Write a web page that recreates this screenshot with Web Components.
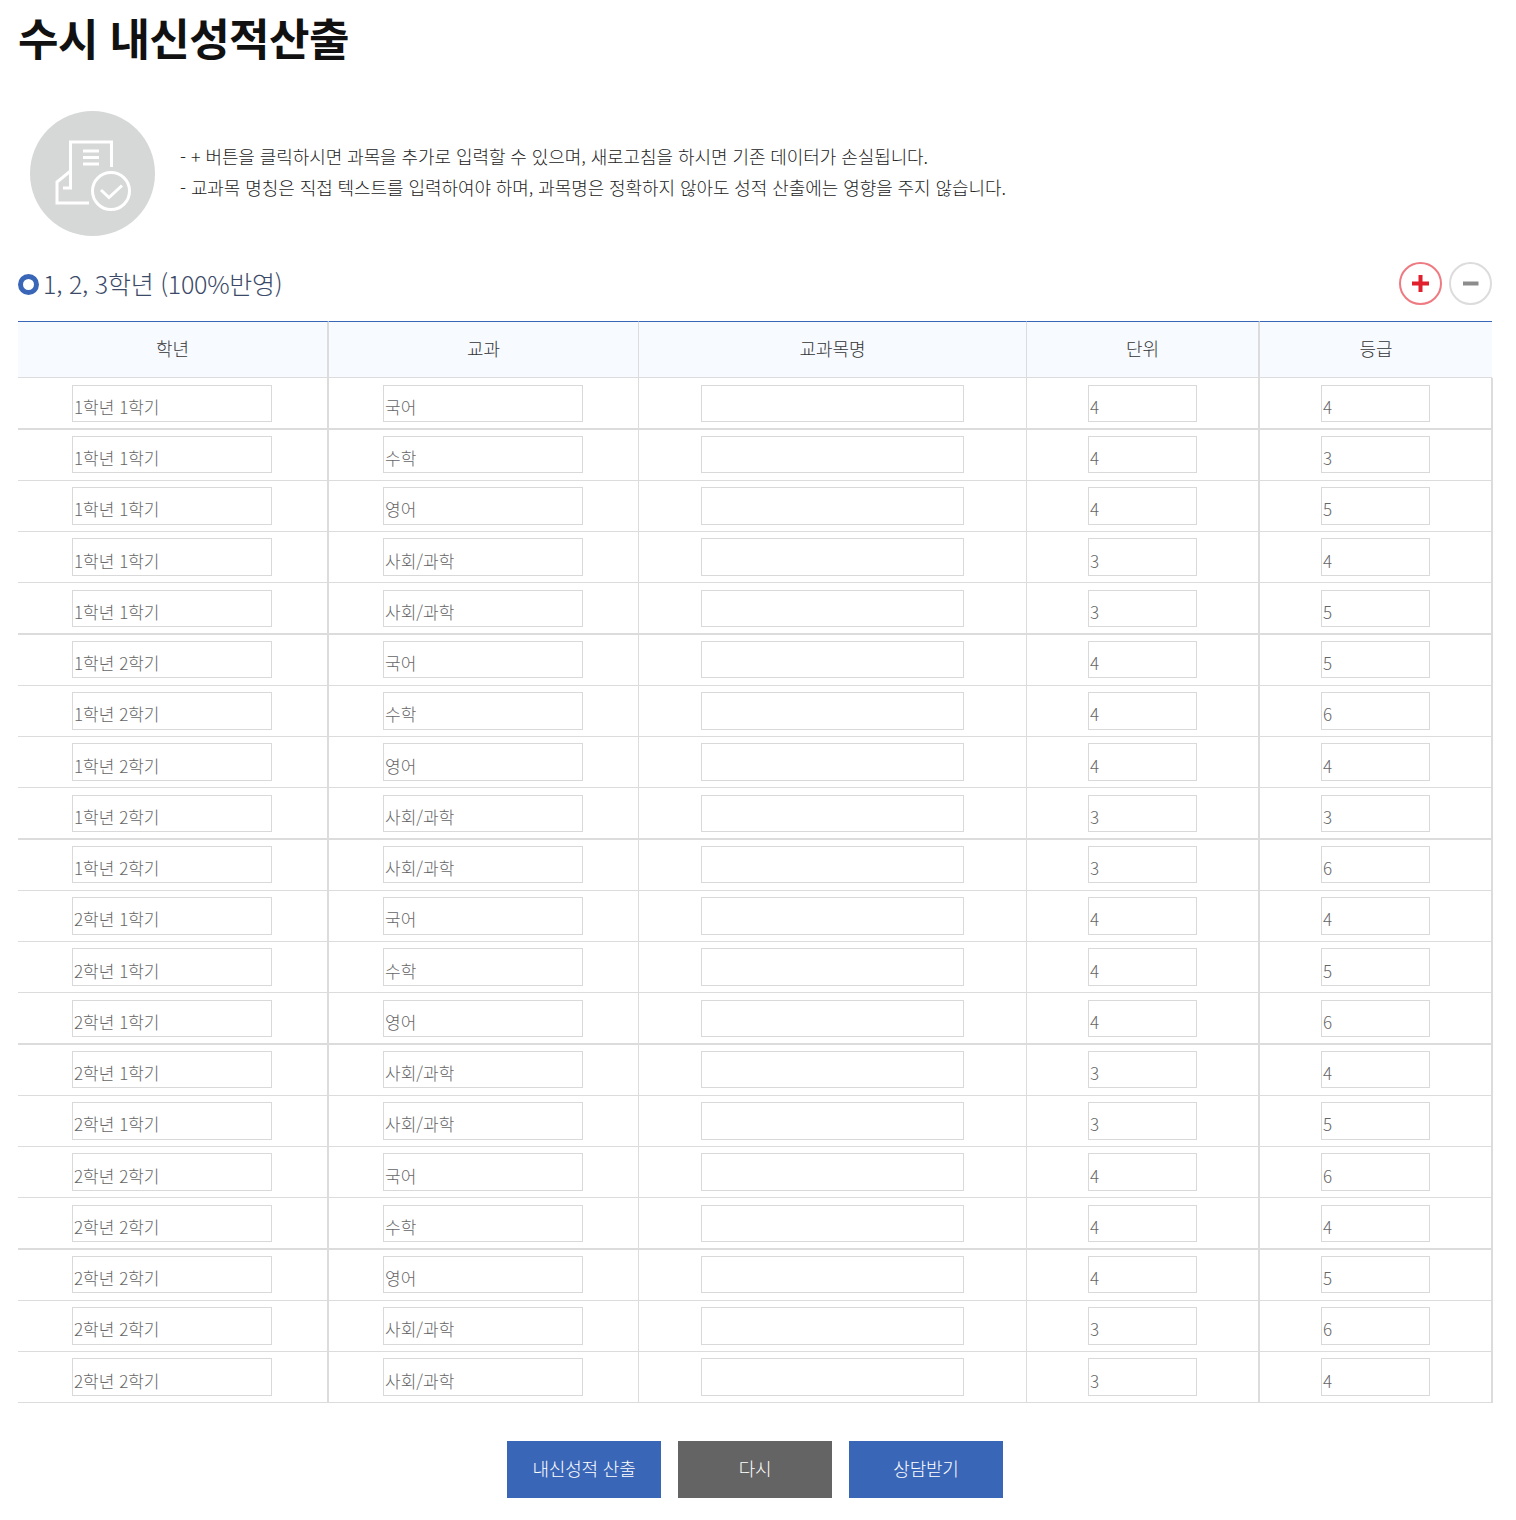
<!DOCTYPE html>
<html lang="ko">
<head>
<meta charset="utf-8">
<title>수시 내신성적산출</title>
<style>
  html, body { margin: 0; background: #fff; }
  body { font-family: "Noto Sans CJK KR", "Noto Sans", sans-serif; }
</style>
</head>
<body>
<grade-page></grade-page>
<script>
class GradePage extends HTMLElement {
  constructor() {
    super()
    const shadow = this.attachShadow({mode: 'open'})
    shadow.innerHTML = `
      <style>
        :host { display: block; padding: 0 24px 22px 18px; box-sizing: border-box; width: 1516px; }
        h1 { margin: 0; height: 111px; font-size: 44px; line-height: 74px; font-weight: 700; letter-spacing: -0.6px; color: #111; }
      </style>
      <h1>수시 내신성적산출</h1>
      <notice-box>
        <div>- + 버튼을 클릭하시면 과목을 추가로 입력할 수 있으며, 새로고침을 하시면 기존 데이터가 손실됩니다.</div>
        <div>- 교과목 명칭은 직접 텍스트를 입력하여야 하며, 과목명은 정확하지 않아도 성적 산출에는 영향을 주지 않습니다.</div>
      </notice-box>
      <section-head>1, 2, 3학년 (100%반영)</section-head>
      <score-table></score-table>
      <action-bar></action-bar>
    `
  }
}

class NoticeBox extends HTMLElement {
  constructor() {
    super()
    const shadow = this.attachShadow({mode: 'open'})
    shadow.innerHTML = `
      <style>
        :host { display: flex; align-items: center; height: 125px; padding-left: 12px; gap: 25px; font-size: 18px; line-height: 31px; letter-spacing: -0.08px; color: #222; font-weight: 300; }
        .round { width: 125px; height: 125px; flex: none; }
        .text { padding-bottom: 4px; }
      </style>
      <svg class="round" viewBox="0 0 125 125">
        <circle cx="62.5" cy="62.5" r="62.5" fill="#d6d7d7"/>
        <g fill="none" stroke="#fff" stroke-width="3">
          <path d="M40.500 61V31H81.500V56"/>
          <path d="M40.500 60L27 71V92H59"/>
          <path d="M40.500 60V77H33"/>
          <path d="M53 40H69M53 46.500H69M53 53H69"/>
          <circle cx="81" cy="80" r="18.500"/>
          <path d="M71 79L79 86.500L92 74.500"/>
        </g>
      </svg>
      <div class="text"><slot></slot></div>
    `
  }
}

class SectionHead extends HTMLElement {
  constructor() {
    super()
    const shadow = this.attachShadow({mode: 'open'})
    shadow.innerHTML = `
      <style>
        :host { display: flex; align-items: center; height: 85px; box-sizing: border-box; padding-top: 10px; font-size: 25px; letter-spacing: -0.25px; color: #3b4a68; font-weight: 300; }
        .dot { width: 21px; height: 21px; box-sizing: border-box; border: 5px solid #3a66b8; border-radius: 50%; margin: 2px 4px 0 0; }
        .title { flex: 1; margin-bottom: 2px; }
        .btn { width: 43px; height: 43px; display: block; }
        .add { margin-right: 7px; }
      </style>
      <span class="dot"></span>
      <span class="title"><slot></slot></span>
      <svg class="btn add" viewBox="0 0 43 43"><circle cx="21.500" cy="21.500" r="20.500" fill="#fff" stroke="#ee7a82" stroke-width="2"/><path d="M21.500 13V30M13 21.500H30" stroke="#e0202c" stroke-width="4"/></svg>
      <svg class="btn" viewBox="0 0 43 43"><circle cx="21.500" cy="21.500" r="20.500" fill="#fff" stroke="#dcdcdc" stroke-width="2"/><path d="M14 21.500H29.500" stroke="#8c8c8c" stroke-width="4"/></svg>
    `
  }
}

class ScoreField extends HTMLElement {
  constructor() {
    super()
    const shadow = this.attachShadow({mode: 'open'})
    shadow.innerHTML = `
      <style>
        :host { display: block; box-sizing: border-box; height: var(--field-h, 37px); border: 1px solid #d9d9d9; background: #fff; padding: var(--field-pad, 9px) 0 0 1px; font-size: 17px; line-height: 24px; color: #666; overflow: hidden; white-space: nowrap; }
      </style>
      <slot></slot>
    `
  }
}

class ScoreTable extends HTMLElement {
  constructor() {
    super()
    const shadow = this.attachShadow({mode: 'open'})
    const subjects = ['국어', '수학', '영어', '사회/과학', '사회/과학']
    const terms = ['1학년 1학기', '1학년 2학기', '2학년 1학기', '2학년 2학기']
    const units = [4, 4, 4, 3, 3]
    const grades = [4,3,5,4,5, 5,6,4,3,6, 4,5,6,4,5, 6,4,5,6,4]
    let rows = ''
    for (let i = 0; i < 20; i++) {
      const s = i % 5
      // the source table lands on fractions, so every 4th row gets a 2px line
      rows += `
        <div class="row r${i % 4}">
          <div class="c c1"><score-field>${terms[Math.floor(i / 5)]}</score-field></div>
          <div class="c c2"><score-field>${subjects[s]}</score-field></div>
          <div class="c c3"><score-field></score-field></div>
          <div class="c c4"><score-field>${units[s]}</score-field></div>
          <div class="c c5"><score-field>${grades[i]}</score-field></div>
        </div>`
    }
    shadow.innerHTML = `
      <style>
        :host { display: block; font-size: 18px; font-weight: 300; }
        .head, .row { display: grid; box-sizing: border-box; }
        .head { grid-template-columns: 311px 310px 388px 233px 232px; width: 1474px; height: 57px; background: #f7faff; color: #333; }
        .head div { display: flex; align-items: center; justify-content: center; box-sizing: border-box; padding-bottom: 4px; border-top: 1px solid #3a66b8; border-bottom: 1px solid #dcdcdc; border-right: 1px solid #dcdcdc; letter-spacing: -0.1px; }
        .head .wide { border-right-width: 2px; }
        .head div:last-child { border-right: 0; }
        .row { grid-template-columns: 311px 310px 388px 233px 233px; width: 1475px; height: 51px; border-bottom: 1px solid #dcdcdc; }
        .r0 { height: 52px; border-bottom-width: 2px; --field-top: 7px; --field-h: 37px; }
        .r1 { --field-top: 6px; --field-h: 37px; }
        .r2 { --field-top: 6px; --field-h: 38px; }
        .r3 { --field-top: 6px; --field-h: 38px; --field-pad: 10px; }
        .c { box-sizing: border-box; border-right: 1px solid #dcdcdc; padding-top: var(--field-top); }
        .c1 { padding-left: 54px; padding-right: 55px; border-right-width: 2px; }
        .c2 { padding-left: 54px; padding-right: 55px; }
        .c3 { padding-left: 62px; padding-right: 62px; }
        .c4 { padding-left: 61px; padding-right: 61px; border-right-width: 2px; }
        .c5 { padding-left: 61px; padding-right: 61px; border-right-width: 2px; }
      </style>
      <div class="head">
        <div class="wide">학년</div><div>교과</div><div>교과목명</div><div class="wide">단위</div><div>등급</div>
      </div>
      ${rows}
    `
  }
}

class ActionBar extends HTMLElement {
  constructor() {
    super()
    const shadow = this.attachShadow({mode: 'open'})
    shadow.innerHTML = `
      <style>
        :host { display: flex; justify-content: center; gap: 17px; padding-top: 38px; font-size: 18px; font-weight: 300; letter-spacing: -0.2px; }
        button { width: 154px; height: 57px; border: 0; padding: 0 0 3px; color: #fff; font: inherit; letter-spacing: inherit; background: #3a66b8; }
        button.gray { background: #646464; }
      </style>
      <button>내신성적 산출</button>
      <button class="gray">다시</button>
      <button>상담받기</button>
    `
  }
}

customElements.define('grade-page', GradePage)
customElements.define('notice-box', NoticeBox)
customElements.define('section-head', SectionHead)
customElements.define('score-field', ScoreField)
customElements.define('score-table', ScoreTable)
customElements.define('action-bar', ActionBar)
</script>
</body>
</html>
